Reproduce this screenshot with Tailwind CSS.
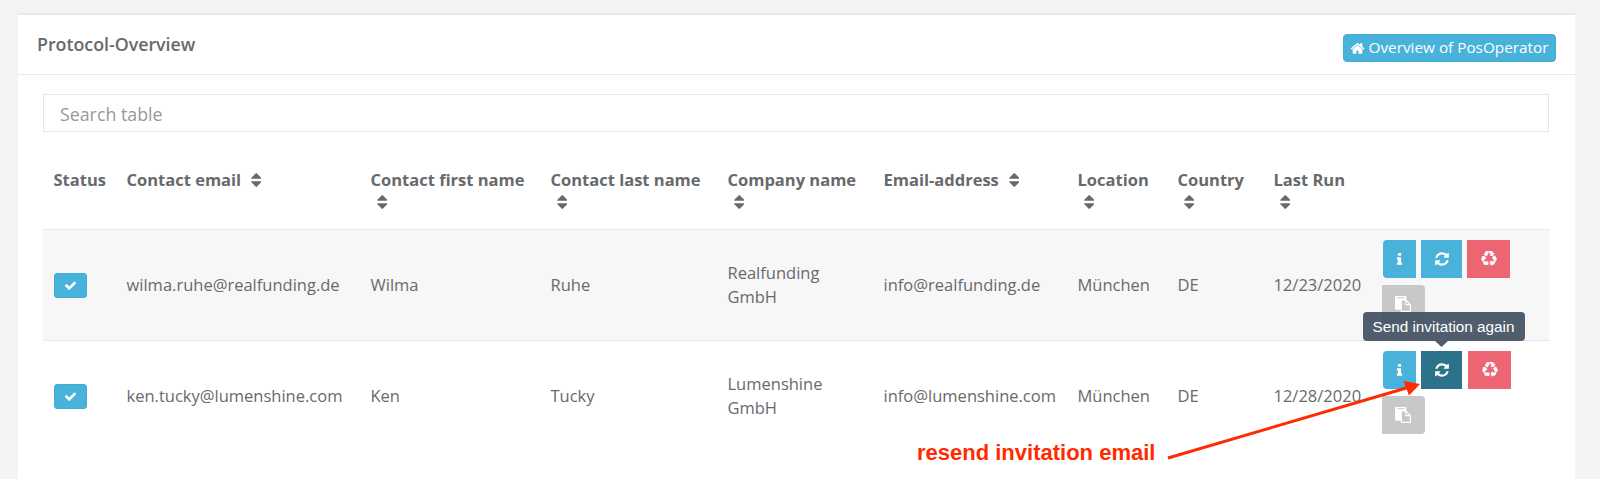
<!DOCTYPE html>
<html lang="en">
<head>
<meta charset="utf-8">
<title>Protocol-Overview</title>
<script src="https://cdn.jsdelivr.net/npm/@tailwindcss/browser@4"></script>
</head>
<body class="h-[479px] overflow-hidden bg-[#f4f4f4] font-['Open_Sans',sans-serif] text-[16.5px] leading-[23.5px] text-[#676a6c]">
<svg class="hidden">
  <symbol id="check" viewBox="0 0 1792 1792"><path d="M1671 566q0 40-28 68l-724 724-136 136q-28 28-68 28t-68-28l-136-136-362-362q-28-28-28-68t28-68l136-136q28-28 68-28t68 28l294 295 656-657q28-28 68-28t68 28l136 136q28 28 28 68z"/></symbol>
  <symbol id="refresh" viewBox="0 0 1792 1792"><path d="M1639 1056q0 5-1 7-64 268-268 434.500t-478 166.500q-146 0-282.500-55t-243.500-157l-129 129q-19 19-45 19t-45-19-19-45v-448q0-26 19-45t45-19h448q26 0 45 19t19 45-19 45l-137 137q71 66 161 102t187 36q134 0 250-65t186-179q11-17 53-117 8-23 30-23h192q13 0 22.500 9.500t9.500 22.500zm25-800v448q0 26-19 45t-45 19h-448q-26 0-45-19t-19-45 19-45l138-138q-148-137-349-137-134 0-250 65t-186 179q-11 17-53 117-8 23-30 23h-199q-13 0-22.500-9.500t-9.500-22.500v-7q65-268 270-434.500t480-166.500q146 0 284 55.500t245 156.500l130-129q19-19 45-19t45 19 19 45z"/></symbol>
  <symbol id="home" viewBox="0 0 1792 1792"><path d="M1472 992v480q0 26-19 45t-45 19h-384v-384h-256v384h-384q-26 0-45-19t-19-45v-480q0-1 .5-3t.5-3l575-474 575 474q1 2 1 6zm223-69l-62 74q-8 9-21 11h-3q-13 0-21-7l-692-577-692 577q-12 8-24 7-13-2-21-11l-62-74q-8-10-7-23.500t11-21.500l719-599q32-26 76-26t76 26l244 204v-195q0-14 9-23t23-9h192q14 0 23 9t9 23v408l219 182q10 8 11 21.500t-7 23.500z"/></symbol>
  <symbol id="info" viewBox="0 0 1792 1792"><path d="M1216 1344v128q0 26-19 45t-45 19h-512q-26 0-45-19t-19-45v-128q0-26 19-45t45-19h64v-384h-64q-26 0-45-19t-19-45v-128q0-26 19-45t45-19h384q26 0 45 19t19 45v576h64q26 0 45 19t19 45zm-128-1152v192q0 26-19 45t-45 19h-256q-26 0-45-19t-19-45v-192q0-26 19-45t45-19h256q26 0 45 19t19 45z"/></symbol>
  <symbol id="sort" viewBox="384 192 1024 1408"><path d="M1408 1088q0 26-19 45l-448 448q-19 19-45 19t-45-19l-448-448q-19-19-19-45t19-45 45-19h896q26 0 45 19t19 45zm0-384q0 26-19 45t-45 19h-896q-26 0-45-19t-19-45 19-45l448-448q19-19 45-19t45 19l448 448q19 19 19 45z"/></symbol>
  <symbol id="recycle" viewBox="0 0 1792 1792"><path d="M836 1169l-15 368-2 22-420-29q-36-3-67-31.500t-47-65.500q-11-27-14.500-55t4-65 12-55 21.500-64 19-53q78 12 509 28zm-387-586l180 379-147-92q-63 72-111.500 144.500t-72.500 125-39.500 94.500-18.500 63l-4 21-190-357q-17-26-18-56t6-47l8-18q35-63 114-188l-140-86zm1231 517l-188 359q-12 29-36.500 46.500t-43.500 20.500l-18 4q-71 7-219 12l8 164-230-367 211-362 7 173q170 16 283 5t170-33zm-785-924q-47 63-265 435l-317-187-19-12 225-356q20-31 60-45t80-10q24 2 48.500 12t42 21 41.500 33 36 34.500 36 39.500 32 35zm655 307l212 363q18 37 12.500 76t-27.500 74q-13 20-33 37t-38 28-48.500 22-47 16-51.500 14-46 12q-34-72-265-436l313-195zm-143-226l142-83-220 373-419-20 151-86q-34-89-75-166t-75.500-123.500-64.500-80-47-46.500l-17-13 405 1q31-3 58 10.500t39 28.500l11 15q39 61 112 190z"/></symbol>
  <symbol id="paste" viewBox="0 0 1792 1792"><path d="M768 1664h896v-640h-416q-40 0-68-28t-28-68v-416h-384v1152zm256-1440v-64q0-13-9.500-22.500t-22.500-9.500h-704q-13 0-22.500 9.500t-9.500 22.500v64q0 13 9.500 22.500t22.500 9.500h704q13 0 22.500-9.500t9.500-22.500zm256 672h299l-299-299v299zm512 128v672q0 40-28 68t-68 28h-960q-40 0-68-28t-28-68v-160h-544q-40 0-68-28t-28-68v-1344q0-40 28-68t68-28h1088q40 0 68 28t28 68v328q21 13 36 28l408 408q28 28 48 76t20 88z"/></symbol>
</svg>

<main class="ml-[18px] mt-[13px] h-[480px] w-[1557px] border-t-2 border-[#e7eaec] bg-white">
  <header class="flex h-[60px] items-start justify-between border-b border-[#e7eaec] pl-[19px] pr-[19.5px]">
    <h1 class="pt-[18px] text-[17.8px] font-semibold">Protocol-Overview</h1>
    <button class="mt-[19px] flex h-7 w-[213px] items-center justify-center gap-1 whitespace-nowrap rounded-[4px] border border-[#3fadd5] bg-[#48b2da] text-[15.3px] leading-none text-white"><svg class="size-[15px] fill-current"><use href="#home"/></svg><span>Overview of PosOperator</span></button>
  </header>

  <section class="px-[25px] pt-[19px]">
    <input class="block h-[38px] w-[1506px] border border-[#e5e6e7] px-4 pt-px text-[17.8px] placeholder:text-[#999999]" placeholder="Search table">

    <div class="mt-[36px] grid h-[62px] grid-cols-[73px_244px_180px_177px_156px_194px_100px_96px_108px_178px] border-b border-[#e7eaec] font-bold whitespace-nowrap *:pl-[10.5px]">
      <div>Status</div>
      <div class="flex items-start gap-[10px]">Contact email<svg class="mt-[5px] h-[14px] w-[10.5px] fill-current"><use href="#sort"/></svg></div>
      <div>Contact first name<svg class="ml-[6px] mt-[3.5px] h-[14px] w-[10.5px] fill-current"><use href="#sort"/></svg></div>
      <div>Contact last name<svg class="ml-[6px] mt-[3.5px] h-[14px] w-[10.5px] fill-current"><use href="#sort"/></svg></div>
      <div>Company name<svg class="ml-[6px] mt-[3.5px] h-[14px] w-[10.5px] fill-current"><use href="#sort"/></svg></div>
      <div class="flex items-start gap-[10px]">Email-address<svg class="mt-[5px] h-[14px] w-[10.5px] fill-current"><use href="#sort"/></svg></div>
      <div>Location<svg class="ml-[6px] mt-[3.5px] h-[14px] w-[10.5px] fill-current"><use href="#sort"/></svg></div>
      <div>Country<svg class="ml-[6px] mt-[3.5px] h-[14px] w-[10.5px] fill-current"><use href="#sort"/></svg></div>
      <div>Last Run<svg class="ml-[6px] mt-[3.5px] h-[14px] w-[10.5px] fill-current"><use href="#sort"/></svg></div>
      <div></div>
    </div>

    <div class="grid h-[111px] grid-cols-[73px_244px_180px_177px_156px_194px_100px_96px_108px_178px] items-center border-b border-[#e7eaec] bg-[#f7f7f7] pb-px *:pl-[10.5px]">
      <div><span class="mt-[2px] flex h-[25px] w-[33px] items-center justify-center rounded-[3px] border border-[#3fadd5] bg-[#48b2da]"><svg class="size-[13px] fill-white"><use href="#check"/></svg></span></div>
      <div>wilma.ruhe@realfunding.de</div>
      <div>Wilma</div>
      <div>Ruhe</div>
      <div>Realfunding<br>GmbH</div>
      <div>info@realfunding.de</div>
      <div>München</div>
      <div>DE</div>
      <div>12/23/2020</div>
      <div class="flex flex-col gap-[6.5px] pb-[6px]">
        <div class="flex h-[38px] gap-[5px] pl-px *:flex *:items-center *:justify-center">
          <button class="w-[33.5px] rounded-l-[4px] bg-[#48b2da]"><svg class="size-[15px] fill-white"><use href="#info"/></svg></button>
          <button class="w-[41px] bg-[#48b2da]"><svg class="size-[16px] fill-white"><use href="#refresh"/></svg></button>
          <button class="w-[43px] bg-[#ed6472]"><svg class="size-[16px] fill-white"><use href="#recycle"/></svg></button>
        </div>
        <button class="flex h-[38px] w-[43px] items-center justify-center rounded-r-[4px] bg-[#c8c8c8]"><svg class="size-[16px] fill-white"><use href="#paste"/></svg></button>
      </div>
    </div>

    <div class="grid h-[110px] grid-cols-[73px_244px_180px_177px_156px_194px_100px_96px_108px_178px] items-center pb-px *:pl-[10.5px]">
      <div><span class="mt-[2px] flex h-[25px] w-[33px] items-center justify-center rounded-[3px] border border-[#3fadd5] bg-[#48b2da]"><svg class="size-[13px] fill-white"><use href="#check"/></svg></span></div>
      <div>ken.tucky@lumenshine.com</div>
      <div>Ken</div>
      <div>Tucky</div>
      <div>Lumenshine<br>GmbH</div>
      <div>info@lumenshine.com</div>
      <div>München</div>
      <div>DE</div>
      <div>12/28/2020</div>
      <div class="flex flex-col gap-[6.5px] pb-[6px]">
        <div class="flex h-[38px] gap-[5px] pl-px *:flex *:items-center *:justify-center">
          <button class="w-[33.5px] rounded-l-[4px] bg-[#48b2da]"><svg class="size-[15px] fill-white"><use href="#info"/></svg></button>
          <button class="relative w-[41px] bg-[#2c728a]"><svg class="size-[16px] fill-white"><use href="#refresh"/></svg>
            <span class="absolute bottom-[48px] left-[22.5px] flex h-[29px] w-[162px] -translate-x-1/2 items-center justify-center whitespace-nowrap rounded-[4px] bg-[#475465]/95 font-['Liberation_Sans',sans-serif] text-[15.3px] leading-none text-white">Send invitation again<svg class="absolute left-[72px] top-[29px] h-[6px] w-[13px] fill-[#475465]/95" viewBox="0 0 13 6"><path d="M0 0h13L6.500 6z"/></svg></span>
          </button>
          <button class="ml-px w-[43px] bg-[#ed6472]"><svg class="size-[16px] fill-white"><use href="#recycle"/></svg></button>
        </div>
        <button class="flex h-[38px] w-[43px] items-center justify-center rounded-r-[4px] bg-[#c8c8c8]"><svg class="size-[16px] fill-white"><use href="#paste"/></svg></button>
      </div>
    </div>
  </section>
</main>

<!-- Annotation -->
<div class="absolute left-[917px] top-[440px] whitespace-nowrap font-['Liberation_Sans',sans-serif] text-[22px] font-bold leading-[26px] text-[#ff2a00]">resend invitation email</div>
<svg class="pointer-events-none absolute left-[1160px] top-[375px] h-[90px] w-[270px]" viewBox="1160 375 270 90"><path d="M1168 458L1408 387.500" class="fill-none stroke-[#ff2a00] stroke-3"/><path d="M1420 384L1403.500 381L1409 395.500z" class="fill-[#ff2a00]"/></svg>
</body>
</html>
